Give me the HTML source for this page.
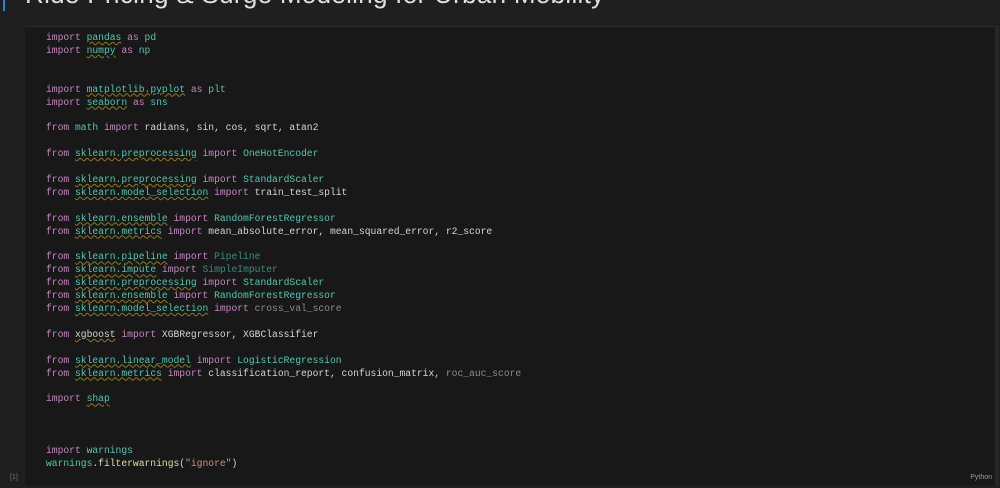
<!DOCTYPE html>
<html><head><meta charset="utf-8"><style>
html,body{margin:0;padding:0;background:#1f1f1f;width:1000px;height:488px;overflow:hidden;position:relative;}
.title{position:absolute;left:25px;top:-21px;font:26px "Liberation Sans",sans-serif;color:#e0e0e0;white-space:nowrap;letter-spacing:0.3px}
.bar{position:absolute;left:3px;top:0;width:2px;height:11px;background:#2f7fd1}
.cell{position:absolute;left:25px;top:26px;width:970px;height:458px;background:#181818;border-top:1px solid #2b2b2b;border-right:4px solid #262626}
pre{position:absolute;left:46px;top:32px;margin:0;font:9.67px/12.9px "Liberation Mono","DejaVu Sans Mono",monospace;color:#d4d4d4}
.k{color:#c586c0}.m{color:#4ec9b0}.d{color:#4ec9b0;opacity:.65}.g{color:#8a8a8a}.s{color:#ce9178}.y{color:#dcdcaa}
.u{text-decoration:underline wavy #8f7a10;text-decoration-thickness:1px;text-underline-offset:1px}
.num{position:absolute;left:10px;top:474px;font:7px "Liberation Sans",sans-serif;color:#777}
.py{position:absolute;right:8px;top:474px;font:7px "Liberation Sans",sans-serif;color:#999}
</style></head><body>
<div class="bar"></div>
<div class="title">Ride Pricing &amp; Surge Modeling for Urban Mobility</div>
<div class="cell"></div>
<pre><span class="k">import</span> <span class="m u">pandas</span> <span class="k">as</span> <span class="m">pd</span>
<span class="k">import</span> <span class="m u">numpy</span> <span class="k">as</span> <span class="m">np</span>


<span class="k">import</span> <span class="m u">matplotlib.pyplot</span> <span class="k">as</span> <span class="m">plt</span>
<span class="k">import</span> <span class="m u">seaborn</span> <span class="k">as</span> <span class="m">sns</span>

<span class="k">from</span> <span class="m">math</span> <span class="k">import</span> radians, sin, cos, sqrt, atan2

<span class="k">from</span> <span class="m u">sklearn.preprocessing</span> <span class="k">import</span> <span class="m">OneHotEncoder</span>

<span class="k">from</span> <span class="m u">sklearn.preprocessing</span> <span class="k">import</span> <span class="m">StandardScaler</span>
<span class="k">from</span> <span class="m u">sklearn.model_selection</span> <span class="k">import</span> train_test_split

<span class="k">from</span> <span class="m u">sklearn.ensemble</span> <span class="k">import</span> <span class="m">RandomForestRegressor</span>
<span class="k">from</span> <span class="m u">sklearn.metrics</span> <span class="k">import</span> mean_absolute_error, mean_squared_error, r2_score

<span class="k">from</span> <span class="m u">sklearn.pipeline</span> <span class="k">import</span> <span class="d">Pipeline</span>
<span class="k">from</span> <span class="m u">sklearn.impute</span> <span class="k">import</span> <span class="d">SimpleImputer</span>
<span class="k">from</span> <span class="m u">sklearn.preprocessing</span> <span class="k">import</span> <span class="m">StandardScaler</span>
<span class="k">from</span> <span class="m u">sklearn.ensemble</span> <span class="k">import</span> <span class="m">RandomForestRegressor</span>
<span class="k">from</span> <span class="m u">sklearn.model_selection</span> <span class="k">import</span> <span class="g">cross_val_score</span>

<span class="k">from</span> <span class="u">xgboost</span> <span class="k">import</span> XGBRegressor, XGBClassifier

<span class="k">from</span> <span class="m u">sklearn.linear_model</span> <span class="k">import</span> <span class="m">LogisticRegression</span>
<span class="k">from</span> <span class="m u">sklearn.metrics</span> <span class="k">import</span> classification_report, confusion_matrix, <span class="g">roc_auc_score</span>

<span class="k">import</span> <span class="m u">shap</span>



<span class="k">import</span> <span class="m">warnings</span>
<span class="m">warnings</span>.<span class="y">filterwarnings</span>(<span class="s">"ignore"</span>)</pre>
<div class="num">[1]</div>
<div class="py">Python</div>
</body></html>
